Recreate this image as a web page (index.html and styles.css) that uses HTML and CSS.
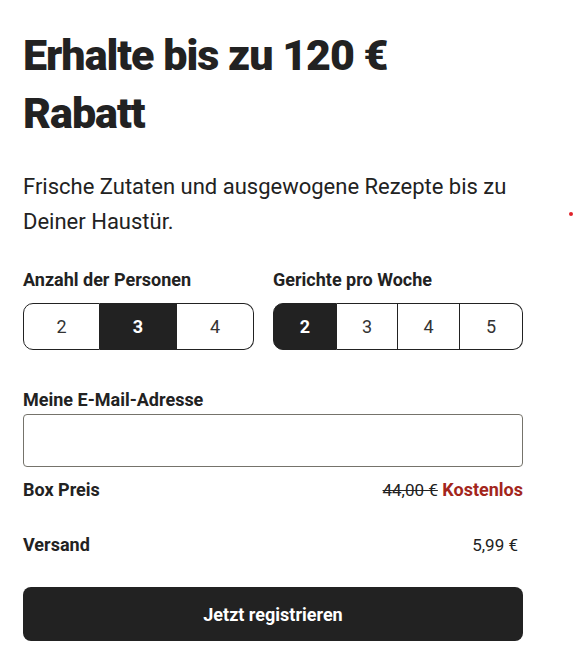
FILE: index.html
```html
<!DOCTYPE html>
<html lang="de">
<head>
    <meta charset="UTF-8">
    <meta name="viewport" content="width=device-width, initial-scale=1.0">
    <title>Jetzt registrieren</title>
    <link rel="stylesheet" href="styles.css">
</head>
<body>
    <div class="signup">
        <h1 class="signup-title">Erhalte bis zu 120&nbsp;€ Rabatt</h1>
        <p class="signup-lead">Frische Zutaten und ausgewogene Rezepte bis zu Deiner Haustür.</p>

        <div class="plan-options">
            <div class="option-group">
                <div class="field-label">Anzahl der Personen</div>
                <div class="segmented segmented-3">
                    <button type="button" class="segment">2</button>
                    <button type="button" class="segment active">3</button>
                    <button type="button" class="segment">4</button>
                </div>
            </div>
            <div class="option-group">
                <div class="field-label">Gerichte pro Woche</div>
                <div class="segmented segmented-4">
                    <button type="button" class="segment active">2</button>
                    <button type="button" class="segment">3</button>
                    <button type="button" class="segment">4</button>
                    <button type="button" class="segment">5</button>
                </div>
            </div>
        </div>

        <div class="email-group">
            <label class="field-label" for="email">Meine E-Mail-Adresse</label>
            <input type="email" id="email" name="email">
        </div>

        <div class="price-row">
            <span class="price-label">Box Preis</span>
            <span class="price-value"><s class="price-old">44,00 €</s> <strong class="price-free">Kostenlos</strong></span>
        </div>
        <div class="price-row">
            <span class="price-label">Versand</span>
            <span class="price-value shipping">5,99 €</span>
        </div>

        <button type="button" class="submit-btn">Jetzt registrieren</button>
    </div>
    <span class="edge-dot"></span>
</body>
</html>
```

FILE: styles.css
```css
body {
    font-family: Roboto, "Noto Sans", Arial, sans-serif;
    color: #222;
    background-color: #fff;
    margin: 0;
    padding: 0;
}
.signup {
    width: 500px;
    padding: 26px 0 0 23px;
}
.signup-title {
    margin: 0;
    width: 400px;
    font-size: 43px;
    line-height: 58px;
    font-weight: 900;
    letter-spacing: -1px;
}
.signup-lead {
    margin: 27px 0 0;
    font-size: 22px;
    line-height: 35px;
}
.field-label {
    display: block;
    font-size: 18px;
    line-height: 21px;
    font-weight: 700;
}
.plan-options {
    display: grid;
    grid-template-columns: 231px 250px;
    column-gap: 19px;
    margin-top: 30px;
}
.segmented {
    display: grid;
    margin-top: 13px;
    height: 47px;
}
.segmented-3 {
    grid-template-columns: repeat(3, 1fr);
}
.segmented-4 {
    grid-template-columns: 64px 61px 62px 1fr;
}
.segment {
    font-family: inherit;
    font-size: 18px;
    color: #333;
    background-color: #fff;
    border: 1px solid #222;
    border-left: none;
    padding: 0;
    cursor: pointer;
}
.segment:first-child {
    border-left: 1px solid #222;
    border-radius: 10px 0 0 10px;
}
.segment:last-child {
    border-radius: 0 10px 10px 0;
}
.segment.active {
    background-color: #222;
    color: #fff;
    font-weight: 700;
}
.email-group {
    margin-top: 39px;
}
.email-group input {
    display: block;
    width: 100%;
    height: 53px;
    margin-top: 4px;
    box-sizing: border-box;
    border: 1px solid #75736b;
    border-radius: 4px;
    font-family: inherit;
    font-size: 16px;
    padding: 0 12px;
}
.price-row {
    display: flex;
    justify-content: space-between;
    font-size: 18px;
    line-height: 20px;
    margin-top: 13px;
}
.price-row + .price-row {
    margin-top: 35px;
}
.price-label {
    font-weight: 700;
}
.price-old {
    font-size: 17px;
}
.price-free {
    color: #a3261c;
}
.shipping {
    padding-right: 5px;
    font-size: 17px;
}
.submit-btn {
    display: block;
    width: 100%;
    height: 54px;
    margin-top: 32px;
    border: none;
    border-radius: 8px;
    background-color: #222;
    color: #fff;
    font-family: inherit;
    font-size: 18px;
    font-weight: 700;
    cursor: pointer;
}
.edge-dot {
    position: absolute;
    left: 569px;
    top: 212px;
    width: 4px;
    height: 4px;
    border-radius: 50%;
    background-color: #e0232a;
}
```
